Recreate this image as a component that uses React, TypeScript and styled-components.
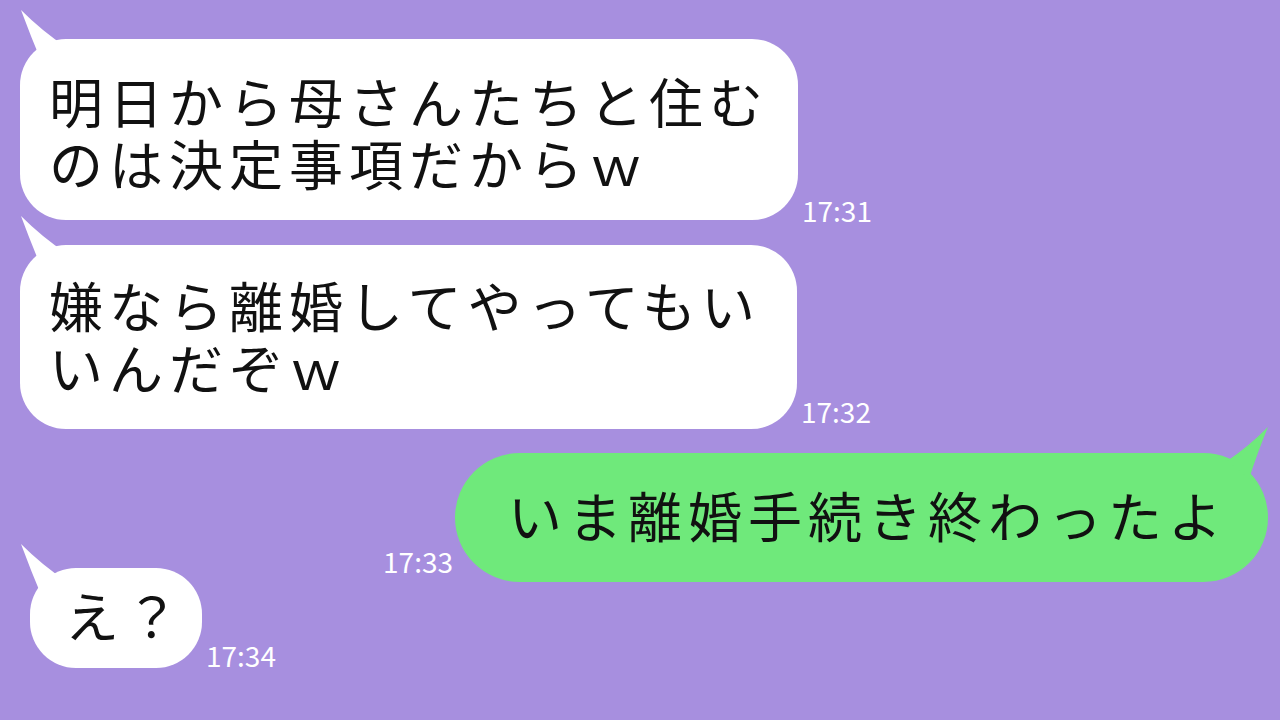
import React from 'react';
import styled, { createGlobalStyle, css } from 'styled-components';

type Side = 'left' | 'right';

interface Message {
    id: number,
    side: Side,
    lines: Array<string>,
    time: string,
    gap: number,
    inset: number,
    width: number,
    pad: string,
    timeDrop: number,
    tailX?: number,
    tailY?: number,
}

const messages: Array<Message> = [
    { id: 1, side: 'left', lines: ['明日から母さんたちと住む', 'のは決定事項だからｗ'], time: '17:31', gap: 39, inset: 20, width: 778, pad: '31px 0 26px 29px', timeDrop: -4 },
    { id: 2, side: 'left', lines: ['嫌なら離婚してやってもい', 'いんだぞｗ'], time: '17:32', gap: 25, inset: 20, width: 777, pad: '29px 0 31px 29px', timeDrop: 4 },
    { id: 3, side: 'right', lines: ['いま離婚手続き終わったよ'], time: '17:33', gap: 24, inset: 12, width: 813, pad: '31px 0 36px 53px', timeDrop: 7 },
    { id: 4, side: 'left', lines: ['え？'], time: '17:34', gap: -14, inset: 30, width: 172, pad: '16px 0 22px 35px', timeDrop: -1, tailX: -10, tailY: -25 },
];

const GlobalStyle = createGlobalStyle`
    html, body {
        margin: 0;
        padding: 0;
        background: #a78fdf;
    }
    body {
        font-family: "Noto Sans CJK JP", "Noto Sans", sans-serif;
    }
`;

const Screen = styled.div`
    width: 1280px;
    height: 720px;
    background: #a78fdf;
    display: flex;
    flex-direction: column;
    overflow: hidden;
`;

const Row = styled.div<{ $side: Side, $gap: number, $inset: number }>`
    display: flex;
    align-items: flex-end;
    margin-top: ${({ $gap }) => $gap}px;
    ${({ $side, $inset }) => $side === 'left'
        ? css`
            flex-direction: row;
            padding-left: ${$inset}px;
        `
        : css`
            flex-direction: row-reverse;
            padding-right: ${$inset}px;
        `}
`;

const Bubble = styled.div<{ $side: Side, $pad: string, $width: number }>`
    position: relative;
    box-sizing: border-box;
    flex: none;
    width: ${({ $width }) => $width}px;
    padding: ${({ $pad }) => $pad};
    background: ${({ $side }) => $side === 'left' ? '#ffffff' : '#6fe97b'};
    border-radius: ${({ $side }) => $side === 'left' ? '46px' : '65px'};
    color: #111111;
    font-size: 54px;
    line-height: 62px;
    letter-spacing: 6px;
    white-space: nowrap;
`;

const Line = styled.div`
    position: relative;
    z-index: 1;
`;

const Tail = styled.svg<{ $side: Side, $x: number, $y: number }>`
    position: absolute;
    top: ${({ $y }) => $y}px;
    width: 48px;
    height: 56px;
    ${({ $side, $x }) => $side === 'left'
        ? css`left: ${$x}px;`
        : css`right: ${$x}px;`}
`;

const Time = styled.span<{ $side: Side, $drop: number }>`
    color: #ffffff;
    font-size: 28px;
    line-height: 28px;
    margin-bottom: ${({ $drop }) => $drop}px;
    ${({ $side }) => $side === 'left'
        ? css`margin-left: 4px;`
        : css`margin-right: 2px;`}
`;

const BubbleTail: React.FC<{ side: Side, x: number, y: number }> = ({ side, x, y }) => (
    <Tail $side={side} $x={x} $y={y} viewBox="0 0 48 56">
        {side === 'left'
            ? <path d="M1 1 Q11 28 22 54 L46 38 Q22 22 1 1 Z" fill="#ffffff" />
            : <path d="M47 2 Q27 22 6 36 L28 54 Q37 26 47 2 Z" fill="#6fe97b" />}
    </Tail>
);

const App: React.FC = () => (
    <>
        <GlobalStyle />
        <Screen>
            {messages.map((msg) => (
                <Row key={msg.id} $side={msg.side} $gap={msg.gap} $inset={msg.inset}>
                    <Bubble $side={msg.side} $pad={msg.pad} $width={msg.width}>
                        <BubbleTail
                            side={msg.side}
                            x={msg.tailX ?? (msg.side === 'left' ? 0 : -1)}
                            y={msg.tailY ?? (msg.side === 'left' ? -30 : -28)}
                        />
                        {msg.lines.map((line, i) => <Line key={i}>{line}</Line>)}
                    </Bubble>
                    <Time $side={msg.side} $drop={msg.timeDrop}>{msg.time}</Time>
                </Row>
            ))}
        </Screen>
    </>
);

export default App;
